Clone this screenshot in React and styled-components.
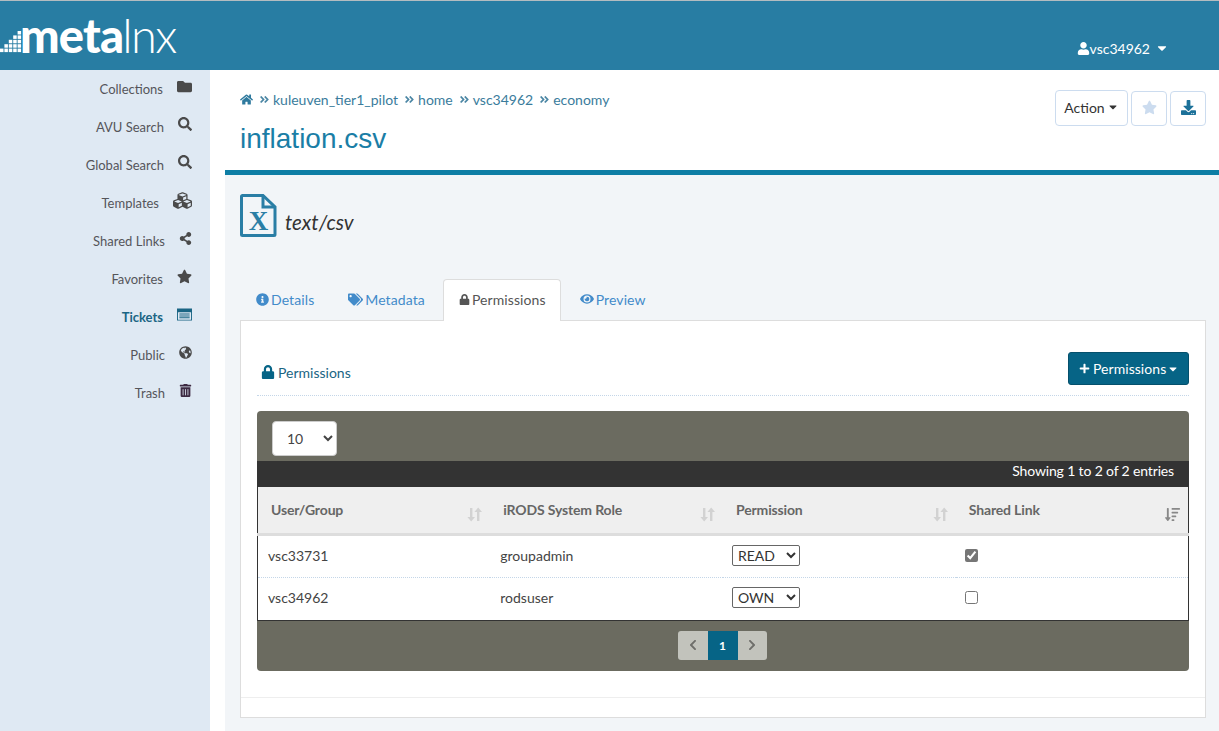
import React from "react";
import styled, { createGlobalStyle } from "styled-components";
import {
  FaAngleDoubleRight,
  FaCaretDown,
  FaChevronLeft,
  FaChevronRight,
  FaCubes,
  FaDownload,
  FaEye,
  FaFolder,
  FaGlobeAmericas,
  FaHome,
  FaInfoCircle,
  FaLock,
  FaPlus,
  FaSearch,
  FaShareAlt,
  FaSortAmountDown,
  FaStar,
  FaTags,
  FaTrashAlt,
  FaUser,
} from "react-icons/fa";

const GlobalStyle = createGlobalStyle`
  html, body {
    margin: 0;
    padding: 0;
    background: #fff;
  }
  body {
    font-family: "Lato", "Liberation Sans", sans-serif;
    font-size: 14px;
    color: #333;
    overflow: hidden;
  }
  * {
    box-sizing: border-box;
  }
`;

const Page = styled.div`
  display: flex;
  flex-direction: column;
  height: 731px;
`;

const TopBar = styled.header`
  height: 70px;
  flex: none;
  display: flex;
  justify-content: space-between;
  background: #287da3;
  border-top: 1px solid #b4bcc0;
`;

const Logo = styled.div`
  display: flex;
  align-items: flex-start;
  height: 100%;
`;

const LogoText = styled.div`
  font-family: "Lato", sans-serif;
  font-size: 47px;
  line-height: 70px;
  margin-top: -1px;
  margin-left: -2px;
  color: #fff;
  letter-spacing: -0.8px;
  b {
    font-weight: 900;
  }
  span {
    font-weight: 300;
    letter-spacing: -1.6px;
    margin-left: -1px;
  }
`;

const UserMenu = styled.div`
  display: flex;
  align-items: center;
  gap: 0;
  height: 16px;
  margin: 39px 50px 0 0;
  color: #fff;
  font-size: 14px;
  svg:last-child {
    margin-left: 5px;
  }
`;

const Body = styled.div`
  flex: 1;
  display: flex;
  min-height: 0;
`;

const Sidebar = styled.nav`
  width: 210px;
  flex: none;
  background: #dfe9f3;
`;

const NavRow = styled.div`
  height: 38px;
  display: flex;
  align-items: center;
  justify-content: flex-end;
  gap: 14px;
  padding: 0 18px 1px 0;
  font-size: 13px;
  color: ${(p) => (p.$active ? "#1a6584" : "#55555a")};
  font-weight: ${(p) => (p.$active ? 700 : 400)};
  svg {
    margin-bottom: 5px;
    color: ${(p) => p.$iconColor || "#4a4a4a"};
  }
`;

const Main = styled.main`
  flex: 1;
  min-width: 0;
  padding-left: 15px;
  display: flex;
  flex-direction: column;
`;

const PageHead = styled.div`
  height: 105px;
  flex: none;
  display: flex;
  justify-content: space-between;
  padding: 20px 13px 0 15px;
  border-bottom: 5px solid #0e7ea5;
  background: #fff;
`;

const Crumbs = styled.div`
  display: flex;
  align-items: center;
  height: 18px;
  color: #3a7c9c;
  svg {
    color: #2f7a9e;
  }
`;

const CrumbSep = styled(FaAngleDoubleRight)`
  width: 11px;
  height: 11px;
  margin: 1px 3px 0 6px;
  && {
    color: #4b86a4;
  }
`;

const Title = styled.h1`
  margin: 13px 0 0;
  font-family: "Liberation Sans", Arial, sans-serif;
  font-size: 28px;
  line-height: 36px;
  font-weight: 400;
  color: #1a7ea6;
`;

const HeadActions = styled.div`
  display: flex;
  gap: 3px;
  height: 36px;
`;

const HeadButton = styled.button`
  width: ${(p) => p.$width || 36}px;
  height: ${(p) => p.$height || 35}px;
  margin-top: ${(p) => (p.$height ? 0 : 1)}px;
  display: flex;
  align-items: center;
  justify-content: center;
  gap: 2px;
  padding: 0 0 2px;
  background: #fff;
  border: 1px solid #ccdcef;
  border-radius: 4px;
  font: inherit;
  color: #333;
`;

const Content = styled.div`
  flex: 1;
  background: #f2f5f8;
  padding: 19px 13px 0 15px;
`;

const FileInfo = styled.div`
  display: flex;
  align-items: flex-end;
  gap: 8px;
  height: 85px;
`;

const FileType = styled.em`
  font-size: 20.5px;
  line-height: 26px;
  margin: 0 0 44px;
  color: #333;
`;

const TabBar = styled.div`
  display: flex;
  height: 41px;
  position: relative;
  z-index: 1;
`;

const Tab = styled.div`
  display: flex;
  align-items: center;
  gap: 2px;
  height: ${(p) => (p.$active ? 42 : 41)}px;
  padding: 0 ${(p) => (p.$active ? 14 : 15)}px 2px 15px;
  margin-right: ${(p) => (p.$active ? 3 : 2)}px;
  letter-spacing: 0.1px;
  color: ${(p) => (p.$active ? "#555" : "#428bca")};
  background: ${(p) => (p.$active ? "#fff" : "transparent")};
  border: 1px solid ${(p) => (p.$active ? "#ddd" : "transparent")};
  border-bottom: 0;
  border-radius: 4px 4px 0 0;
`;

const Panel = styled.section`
  height: 398px;
  background: #fff;
  border: 1px solid #ddd;
  padding: 31px 16px 0;
`;

const PanelHead = styled.div`
  display: flex;
  justify-content: space-between;
  align-items: flex-start;
  height: 44px;
  border-bottom: 1px dotted #c4d6e8;
`;

const PanelTitle = styled.div`
  display: flex;
  align-items: center;
  gap: 3px;
  height: 22px;
  margin: 9px 0 0 4px;
  color: #1a6584;
  svg {
    color: #066486;
    margin-bottom: 1px;
  }
`;

const PrimaryButton = styled.button`
  display: flex;
  align-items: center;
  gap: 3px;
  width: 121px;
  height: 33px;
  padding: 0 0 0 10px;
  background: #066486;
  border: 1px solid #05506c;
  border-radius: 3px;
  color: #fff;
  font: inherit;
  letter-spacing: 0.05px;
`;

const TableCard = styled.div`
  margin-top: 15px;
  height: 260px;
  background: #6b6b60;
  border-radius: 4px;
  display: flex;
  flex-direction: column;
`;

const LengthBar = styled.div`
  height: 50px;
  flex: none;
  padding: 10px 15px 0;
`;

const LengthSelect = styled.select`
  width: 65px;
  height: 35px;
  padding: 0 0 0 10px;
  background-color: #fff;
  border: 1px solid #ccc;
  border-radius: 4px;
  font: inherit;
  font-size: 14px;
  color: #444;
`;

const InfoBar = styled.div`
  height: 26px;
  flex: none;
  background: #333;
  color: #fff;
  text-align: right;
  padding: 0 15px 0 0;
  line-height: 20px;
  letter-spacing: -0.15px;
`;

const Table = styled.table`
  width: 100%;
  table-layout: fixed;
  border-collapse: collapse;
  background: #fff;
  border-left: 1px solid #333;
  border-right: 1px solid #333;
  border-bottom: 1px solid #333;
`;

const HeadCell = styled.th`
  height: 47px;
  padding: 0 8px 0 13px;
  background: #efefef;
  border-bottom: 3px solid #ddd;
  text-align: left;
  color: #666;
  font-weight: 700;
  letter-spacing: -0.15px;
`;

const HeadInner = styled.div`
  display: flex;
  align-items: center;
  justify-content: space-between;
  svg {
    margin-top: 10px;
  }
`;

const Row = styled.tr`
  & + & td {
    border-top: 1px dotted #c4d6e8;
  }
`;

const Cell = styled.td`
  height: 43px;
  padding: 0 10px 2px;
  color: #444;
`;

const RowSelect = styled.select`
  display: block;
  width: 68px;
  height: 21px;
  margin-left: -1px;
  padding: 0 0 0 1px;
  background: #fff;
  border: 1px solid #666;
  border-radius: 2px;
  font: inherit;
  font-size: 14px;
  color: #333;
`;

const SharedBox = styled.input`
  display: block;
  width: 13px;
  height: 13px;
  margin: 0 0 0 -1px;
  accent-color: #767676;
`;

const PagerBar = styled.div`
  flex: 1;
  display: flex;
  justify-content: center;
  padding: 10px 1px 0 0;
`;

const Pager = styled.div`
  display: flex;
  height: 29px;
  border-radius: 3px;
  overflow: hidden;
`;

const PageButton = styled.div`
  width: ${(p) => (p.$active ? 30 : 29.5)}px;
  display: flex;
  align-items: center;
  justify-content: center;
  background: ${(p) => (p.$active ? "#066486" : "#c2c3bc")};
  color: ${(p) => (p.$active ? "#fff" : "#6e6e6a")};
  font-size: 12px;
  font-weight: 700;
`;

const PanelFoot = styled.div`
  margin: 26px -16px 0;
  border-top: 1px solid #eee;
`;

const LogoBlocks = () => {
  // staircase of little squares in front of the word mark
  const heights = [1, 2, 3, 4, 5];
  return (
    <svg width="22" height="69" viewBox="0 0 22 69" fill="#fff" aria-hidden="true">
      {heights.map((h, col) =>
        Array.from({ length: h }).map((_, row) => (
          <rect key={`${col}-${row}`} x={col * 4.4} y={47.6 - row * 4.4} width="3.5" height="3.5" />
        ))
      )}
    </svg>
  );
};

const FileIcon = () => (
  <svg width="37" height="43" viewBox="0 0 37 43" aria-hidden="true" style={{ marginBottom: 42 }}>
    <path
      d="M1.5 2.5 a1 1 0 0 1 1-1 H23 L35 13 V40.5 a1 1 0 0 1-1 1 H2.5 a1 1 0 0 1-1-1 Z"
      fill="none"
      stroke="#2a7ea5"
      strokeWidth="3"
    />
    <path d="M23 1.5 V13 H35" fill="none" stroke="#2a7ea5" strokeWidth="3" />
    <text
      x="18.5"
      y="36"
      textAnchor="middle"
      fontFamily="'Liberation Serif', serif"
      fontWeight="700"
      fontSize="27"
      fill="#2a7ea5"
    >
      X
    </text>
  </svg>
);

const SortIcon = () => (
  <svg width="15" height="15" viewBox="0 0 15 15" fill="#d2d2d2" aria-hidden="true">
    <path d="M3 1h2.4v9H8l-3.8 4.5L.4 10H3Z" />
    <path d="M10 14h2.4V5H15L11.2.5 7.4 5H10Z" />
  </svg>
);

const TicketsIcon = ({ size }) => (
  <svg width={size} height={size} viewBox="0 0 16 16" fill="currentColor" aria-hidden="true">
    <path d="M0 1.5h16v13H0Zm1 4v8h14v-8Z" fillRule="evenodd" />
    <path d="M2.5 7h11v1h-11Zm0 2h11v1h-11Zm0 2h11v1h-11Z" />
  </svg>
);

const NAV_ITEMS = [
  { label: "Collections", Icon: FaFolder, size: 15 },
  { label: "AVU Search", Icon: FaSearch, size: 14 },
  { label: "Global Search", Icon: FaSearch, size: 14 },
  { label: "Templates", Icon: FaCubes, size: 19 },
  { label: "Shared Links", Icon: FaShareAlt, size: 13 },
  { label: "Favorites", Icon: FaStar, size: 15 },
  { label: "Tickets", Icon: TicketsIcon, size: 15, active: true, iconColor: "#1a6584" },
  { label: "Public", Icon: FaGlobeAmericas, size: 13 },
  { label: "Trash", Icon: FaTrashAlt, size: 13, iconColor: "#3d2a42" },
];

const CRUMBS = ["kuleuven_tier1_pilot", "home", "vsc34962", "economy"];

const ROWS = [
  { user: "vsc33731", role: "groupadmin", perm: "READ", shared: true },
  { user: "vsc34962", role: "rodsuser", perm: "OWN", shared: false },
];

const App = () => {
  return (
    <Page>
      <GlobalStyle />
      <TopBar>
        <Logo>
          <LogoBlocks />
          <LogoText>
            <b>meta</b>
            <span>lnx</span>
          </LogoText>
        </Logo>
        <UserMenu>
          <FaUser size={13} />
          vsc34962
          <FaCaretDown size={14} />
        </UserMenu>
      </TopBar>
      <Body>
        <Sidebar>
          {NAV_ITEMS.map(({ label, Icon, size, active, iconColor }) => (
            <NavRow key={label} $active={active} $iconColor={iconColor}>
              {label}
              <Icon size={size} />
            </NavRow>
          ))}
        </Sidebar>
        <Main>
          <PageHead>
            <div>
              <Crumbs>
                <FaHome size={13} />
                {CRUMBS.map((c) => (
                  <React.Fragment key={c}>
                    <CrumbSep />
                    {c}
                  </React.Fragment>
                ))}
              </Crumbs>
              <Title>inflation.csv</Title>
            </div>
            <HeadActions>
              <HeadButton $width={73} $height={36}>
                Action
                <FaCaretDown size={12} />
              </HeadButton>
              <HeadButton>
                <FaStar size={15} color="#ccdcef" />
              </HeadButton>
              <HeadButton>
                <FaDownload size={15} color="#1c7199" />
              </HeadButton>
            </HeadActions>
          </PageHead>
          <Content>
            <FileInfo>
              <FileIcon />
              <FileType>text/csv</FileType>
            </FileInfo>
            <TabBar>
              <Tab>
                <FaInfoCircle size={13} />
                Details
              </Tab>
              <Tab>
                <FaTags size={15} />
                Metadata
              </Tab>
              <Tab $active>
                <FaLock size={11} />
                Permissions
              </Tab>
              <Tab>
                <FaEye size={14} />
                Preview
              </Tab>
            </TabBar>
            <Panel>
              <PanelHead>
                <PanelTitle>
                  <FaLock size={14} />
                  Permissions
                </PanelTitle>
                <PrimaryButton>
                  <FaPlus size={11} />
                  Permissions
                  <FaCaretDown size={12} style={{ marginLeft: -2 }} />
                </PrimaryButton>
              </PanelHead>
              <TableCard>
                <LengthBar>
                  <LengthSelect defaultValue="10">
                    <option>10</option>
                    <option>25</option>
                    <option>50</option>
                  </LengthSelect>
                </LengthBar>
                <InfoBar>Showing 1 to 2 of 2 entries</InfoBar>
                <Table>
                  <thead>
                    <tr>
                      {["User/Group", "iRODS System Role", "Permission"].map((h) => (
                        <HeadCell key={h}>
                          <HeadInner>
                            {h}
                            <SortIcon />
                          </HeadInner>
                        </HeadCell>
                      ))}
                      <HeadCell>
                        <HeadInner>
                          Shared Link
                          <FaSortAmountDown size={15} color="#888" />
                        </HeadInner>
                      </HeadCell>
                    </tr>
                  </thead>
                  <tbody>
                    {ROWS.map((r) => (
                      <Row key={r.user}>
                        <Cell>{r.user}</Cell>
                        <Cell>{r.role}</Cell>
                        <Cell>
                          <RowSelect defaultValue={r.perm}>
                            <option>NONE</option>
                            <option>READ</option>
                            <option>WRITE</option>
                            <option>OWN</option>
                          </RowSelect>
                        </Cell>
                        <Cell>
                          <SharedBox type="checkbox" defaultChecked={r.shared} />
                        </Cell>
                      </Row>
                    ))}
                  </tbody>
                </Table>
                <PagerBar>
                  <Pager>
                    <PageButton>
                      <FaChevronLeft size={12} />
                    </PageButton>
                    <PageButton $active>1</PageButton>
                    <PageButton>
                      <FaChevronRight size={12} />
                    </PageButton>
                  </Pager>
                </PagerBar>
              </TableCard>
              <PanelFoot />
            </Panel>
          </Content>
        </Main>
      </Body>
    </Page>
  );
};

export default App;
